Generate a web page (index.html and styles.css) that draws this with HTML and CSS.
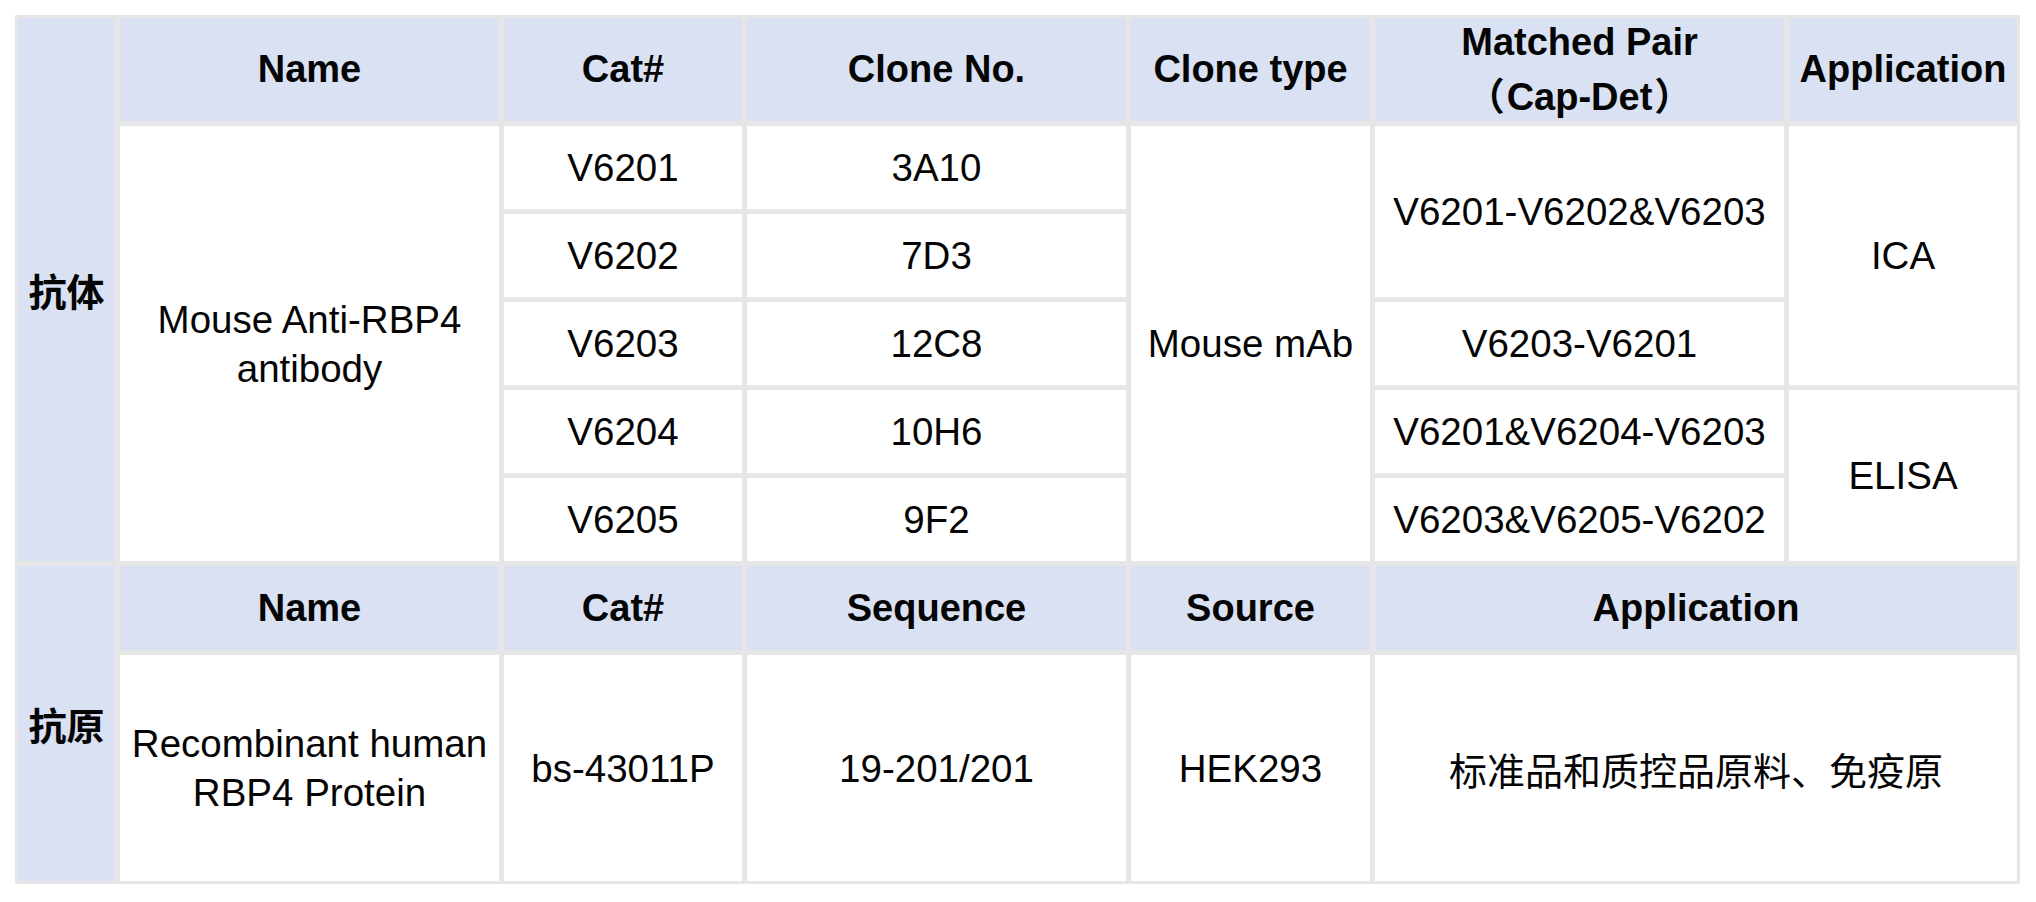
FILE: index.html
```html
<!DOCTYPE html>
<html lang="zh">
<head>
<meta charset="utf-8">
<title>RBP4</title>
<link rel="stylesheet" href="styles.css">
</head>
<body>
<div class="sheet">
  <div class="cell side side-a"><span class="t">抗体</span></div>
  <div class="cell head"><span class="t">Name</span></div>
  <div class="cell head"><span class="t">Cat#</span></div>
  <div class="cell head"><span class="t">Clone No.</span></div>
  <div class="cell head"><span class="t">Clone type</span></div>
  <div class="cell head two"><span class="t">Matched Pair<br><span class="fp open">（</span>Cap-Det<span class="fp close">）</span></span></div>
  <div class="cell head"><span class="t">Application</span></div>

  <div class="cell name-a"><span class="t">Mouse Anti-RBP4<br>antibody</span></div>
  <div class="cell r2 c3"><span class="t">V6201</span></div>
  <div class="cell r2 c4"><span class="t">3A10</span></div>
  <div class="cell type-a"><span class="t">Mouse mAb</span></div>
  <div class="cell pair-1"><span class="t">V6201-V6202&amp;V6203</span></div>
  <div class="cell app-1"><span class="t">ICA</span></div>

  <div class="cell r3 c3"><span class="t">V6202</span></div>
  <div class="cell r3 c4"><span class="t">7D3</span></div>

  <div class="cell r4 c3"><span class="t">V6203</span></div>
  <div class="cell r4 c4"><span class="t">12C8</span></div>
  <div class="cell r4 c6"><span class="t">V6203-V6201</span></div>

  <div class="cell r5 c3"><span class="t">V6204</span></div>
  <div class="cell r5 c4"><span class="t">10H6</span></div>
  <div class="cell r5 c6"><span class="t">V6201&amp;V6204-V6203</span></div>
  <div class="cell app-2"><span class="t">ELISA</span></div>

  <div class="cell r6 c3"><span class="t">V6205</span></div>
  <div class="cell r6 c4"><span class="t">9F2</span></div>
  <div class="cell r6 c6"><span class="t">V6203&amp;V6205-V6202</span></div>

  <div class="cell side side-b"><span class="t">抗原</span></div>
  <div class="cell head r7 c2"><span class="t">Name</span></div>
  <div class="cell head r7 c3"><span class="t">Cat#</span></div>
  <div class="cell head r7 c4"><span class="t">Sequence</span></div>
  <div class="cell head r7 c5"><span class="t">Source</span></div>
  <div class="cell head r7 wide"><span class="t">Application</span></div>

  <div class="cell r8 c2"><span class="t">Recombinant human<br>RBP4 Protein</span></div>
  <div class="cell r8 c3"><span class="t">bs-43011P</span></div>
  <div class="cell r8 c4"><span class="t">19-201/201</span></div>
  <div class="cell r8 c5"><span class="t">HEK293</span></div>
  <div class="cell r8 wide cn"><span class="t">标准品和质控品原料、免疫原</span></div>
</div>
</body>
</html>
```

FILE: styles.css
```css
html, body {
  margin: 0;
  padding: 0;
  background: #ffffff;
}

body {
  font-family: "Liberation Sans", Arial, "Noto Sans CJK SC", sans-serif;
  color: #050505;
}

.sheet {
  margin: 15px 0 0 15px;
  width: 1999px;
  padding: 3px;
  background: #e6e6e6;
  display: grid;
  grid-template-columns: 97px 379px 238px 379px 239px 409px 228px;
  grid-template-rows: 103px 83px 83px 83px 83px 83px 84px 226px;
  gap: 5px;
}

.cell {
  background: #ffffff;
  display: flex;
  align-items: center;
  justify-content: center;
  text-align: center;
  font-size: 38.5px;
  line-height: 49px;
}

.t {
  display: block;
  white-space: nowrap;
}

.head {
  background: #d9e1f2;
  font-weight: bold;
  font-size: 38px;
}

.two {
  line-height: 51px;
  text-spacing-trim: space-all;
}

.fp {
  font-family: "Noto Sans CJK SC", sans-serif;
  font-weight: bold;
}

.fp.open {
  margin-right: 2px;
}

.fp.close {
  margin-left: 2px;
}

.side {
  background: #d9e1f2;
  font-family: "Noto Sans CJK SC", sans-serif;
  font-weight: bold;
  font-size: 38px;
  grid-column: 1;
}

.side-a { grid-row: 1 / 7; }
.side-b { grid-row: 7 / 9; }

.name-a { grid-column: 2; grid-row: 2 / 7; }
.type-a { grid-column: 5; grid-row: 2 / 7; }
.pair-1 { grid-column: 6; grid-row: 2 / 4; }
.app-1 { grid-column: 7; grid-row: 2 / 5; }
.app-2 { grid-column: 7; grid-row: 5 / 7; }

.r2 { grid-row: 2; }
.r3 { grid-row: 3; }
.r4 { grid-row: 4; }
.r5 { grid-row: 5; }
.r6 { grid-row: 6; }
.r7 { grid-row: 7; }
.r8 { grid-row: 8; }

.c2 { grid-column: 2; }
.c3 { grid-column: 3; }
.c4 { grid-column: 4; }
.c5 { grid-column: 5; }
.c6 { grid-column: 6; }
.wide { grid-column: 6 / 8; }

.cn {
  font-family: "Noto Sans CJK SC", sans-serif;
  font-size: 38px;
}
```
